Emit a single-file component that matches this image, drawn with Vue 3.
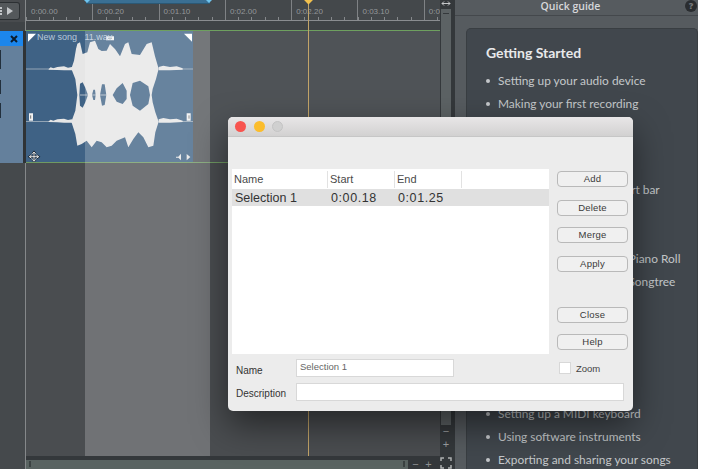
<script setup>
const marks = ['0:00.00', '0:00.20', '0:01.10', '0:02.00', '0:02.20', '0:03.10', '0:04.00']

const guideGroups = [
  ['Setting up your audio device', 'Making your first recording'],
  [
    'Working with the transport bar',
    'Adding a track',
    'Editing clips',
    'Recording notes into the Piano Roll',
    'Building a structure with Songtree'
  ],
  ['Setting up a MIDI keyboard', 'Using software instruments', 'Exporting and sharing your songs']
]

const topButtons = ['Add', 'Delete', 'Merge', 'Apply']
const lowButtons = ['Close', 'Help']
</script>

<template>
  <div class="app">
    <aside class="track-col">
      <div class="track-top">
        <div class="play-btn"><span class="play-tri"></span></div>
      </div>
      <div class="track-head">
        <div class="track-title">
          <svg width="10" height="10" viewBox="0 0 10 10">
            <path d="M2 2 8 8M8 2 2 8" stroke="#0c1c2c" stroke-width="2" fill="none" />
          </svg>
        </div>
        <div class="track-notches">
          <i></i><i></i><i></i>
        </div>
      </div>
      <div class="track-rest"></div>
    </aside>

    <main class="middle">
      <div class="middle-top">
        <section class="arrange">
          <div class="ruler">
            <div v-for="(m, i) in marks" :key="m" class="mark" :class="{ first: i === 0 }">{{ m }}</div>
          </div>
          <div class="band"></div>
          <div class="lane">
            <div class="clip">
              <span class="clip-name">New song &nbsp; 11.wav</span>
              <svg class="wave" viewBox="78 96 501 393" width="167" height="131">
                <g fill="#e6e6e6">
                  <path fill-rule="evenodd" d="M214 209 222 185 228 150 232 134 240 130 248 165 262 160 270 130 285 125 295 150 305 156 320 155 330 135 345 150 360 172 375 135 385 130 395 165 420 168 440 135 455 130 465 172 476 209 468 240 458 270 455 288 458 310 466 340 476 368 466 400 460 440 445 445 430 415 415 400 400 420 385 445 375 415 350 425 335 440 320 445 305 430 290 425 275 445 260 425 245 435 232 440 226 405 214 368 226 335 232 288 226 240Z
                    M238 288 240 254 248 250 256 266 264 288 256 310 248 326 240 320Z
                    M276 288 280 272 285 272 287 288 285 303 280 303Z
                    M300 288 306 256 314 256 319 288 314 318 306 320Z
                    M338 288 350 268 368 252 380 275 380 300 368 315 350 308Z
                    M390 288 398 252 420 245 445 262 450 288 445 315 420 335 398 320Z" />
                  <path d="M78 209H214V211H78ZM476 209H579V211H476ZM78 366.500H214V368.500H78ZM476 366.500H579V368.500H476Z" />
                  <path d="M146 210 152 205 160 208 172 204 192 202 204 206 216 204 216 214 192 214 172 213 146 212ZM476 204 490 200 510 204 530 202 548 208 548 212 510 214 476 214ZM146 367 152 362 160 365 172 361 192 359 204 363 216 361 216 371 192 371 172 370 146 369ZM476 361 490 357 510 361 530 359 548 365 548 369 510 371 476 371Z" />
                </g>
                <path d="M240 287H336V289H240Z" fill="#e6e6e6" />
                <path d="M84 128V104H108ZM576 128V104H552Z" fill="#fff" />
                <path d="M87 343h12v22H87ZM560 343h12v22h-12ZM318 112h24v12h-24Z" fill="#f2f2f2" />
                <path d="M92 349v10M567 349v10M325 118h10" stroke="#333" stroke-width="2" />
                <path d="M528 473 535 473 543 464V484L535 476H528ZM560 465 571 474 560 484Z" fill="#e6e6e6" />
                <g fill="none">
                  <path d="M102 460V486M89 473H115M97 465 102 459 107 465M97 481 102 487 107 481M95 468 88 473 95 478M109 468 116 473 109 478" stroke="#1c2630" stroke-width="6" />
                  <path d="M102 460V486M89 473H115M97 465 102 459 107 465M97 481 102 487 107 481M95 468 88 473 95 478M109 468 116 473 109 478" stroke="#fff" stroke-width="2.500" />
                </g>
              </svg>
            </div>
          </div>
          <div class="lower"></div>
          <div class="selection"></div>
          <div class="loop-bar"></div>
          <div class="playhead"></div>
        </section>
        <div class="vscroll">
          <div class="fit-icon">
            <svg width="10" height="7" viewBox="0 0 10 7">
              <path d="M1 3.500H9M3 1.500 1 3.500 3 5.500M7 1.500 9 3.500 7 5.500" stroke="#c4c6c8" stroke-width="1" fill="none" />
            </svg>
          </div>
          <div class="vthumb"><i></i></div>
          <div class="zoom-sign">−</div>
          <div class="zoom-sign">+</div>
        </div>
      </div>
      <div class="hscroll">
        <div class="hthumb"><i></i><i class="end"></i></div>
        <span class="h-sign">−</span>
        <span class="h-sign">+</span>
        <svg class="fit-all" width="12" height="12" viewBox="0 0 12 12">
          <path d="M1 4V1H4M8 1H11V4M11 8V11H8M4 11H1V8" stroke="#aeb1b3" stroke-width="1.500" fill="none" />
        </svg>
      </div>
    </main>

    <section class="guide">
      <header class="guide-title">
        <span>Quick guide</span>
        <b class="help-dot">?</b>
      </header>
      <div class="guide-strip"></div>
      <article class="guide-card">
        <h2>Getting Started</h2>
        <ul v-for="(group, i) in guideGroups" :key="i" :class="'group-' + i">
          <li v-for="item in group" :key="item">{{ item }}</li>
        </ul>
      </article>
    </section>
    <div class="page-edge"></div>

    <div class="dialog">
      <div class="dlg-title">
        <i class="light red"></i>
        <i class="light yellow"></i>
        <i class="light grey"></i>
      </div>
      <div class="dlg-body">
        <div class="dlg-main">
          <div class="dlg-left">
            <div class="table">
              <div class="t-head">
                <span class="c1">Name</span>
                <span class="c2">Start</span>
                <span class="c3">End</span>
                <span class="c4"></span>
              </div>
              <div class="t-row">
                <span class="c1">Selection 1</span>
                <span class="c2">0:00.18</span>
                <span class="c3">0:01.25</span>
              </div>
            </div>
            <div class="field name-field">
              <label>Name</label>
              <div class="input">Selection 1</div>
            </div>
          </div>
          <div class="dlg-side">
            <div class="btn-group top">
              <button v-for="b in topButtons" :key="b" class="btn">{{ b }}</button>
            </div>
            <div class="btn-group low">
              <button v-for="b in lowButtons" :key="b" class="btn">{{ b }}</button>
            </div>
            <div class="zoom-row">
              <i class="check"></i>
              <span>Zoom</span>
            </div>
          </div>
        </div>
        <div class="field desc-field">
          <label>Description</label>
          <div class="input wide"></div>
        </div>
      </div>
    </div>
  </div>
</template>

<style scoped>
.app {
  position: relative;
  display: flex;
  width: 705px;
  height: 469px;
  overflow: hidden;
  background: #4a4d50;
  font-family: "Liberation Sans", Arial, sans-serif;
}

/* track column */
.track-col {
  width: 26px;
  flex: none;
  display: flex;
  flex-direction: column;
  border-right: 1px solid #85888a;
  box-sizing: border-box;
  background: #45494c;
}
.track-top {
  height: 31px;
  box-sizing: border-box;
  padding-top: 2px;
  background: linear-gradient(#484b4e 0 22px, #3f4346 22px);
}
.play-btn {
  width: 20px;
  height: 18px;
  box-sizing: border-box;
  border: 1px solid #2c3033;
  border-left: 0;
  border-radius: 0 3px 3px 0;
  background: #54585b;
  display: flex;
  align-items: center;
  justify-content: space-between;
  padding-right: 6px;
}
.play-btn::before {
  content: "";
  width: 2px;
  height: 8px;
  background: repeating-linear-gradient(#c3c6c9 0 2px, transparent 2px 3px);
}
.play-tri {
  width: 0;
  height: 0;
  border-left: 6px solid #c3c6c9;
  border-top: 4.500px solid transparent;
  border-bottom: 4.500px solid transparent;
}
.track-head {
  height: 132px;
  box-sizing: border-box;
  margin-right: -1px;
  border-right: 3px solid #2f3336;
  background: #64809c;
}
.track-title {
  height: 15px;
  background: #1c86ec;
  display: flex;
  align-items: center;
  justify-content: flex-end;
  padding-right: 4px;
}
.track-notches {
  padding-top: 4px;
}
.track-notches i {
  display: block;
  width: 1px;
  background: #22303d;
}
.track-notches i:nth-child(1) {
  height: 19px;
}
.track-notches i:nth-child(2) {
  height: 14px;
  margin-top: 11px;
}
.track-notches i:nth-child(3) {
  height: 15px;
  margin-top: 9px;
}
.track-rest {
  flex: 1;
  background: #45494c;
}

/* timeline */
.middle {
  width: 429px;
  flex: none;
  display: flex;
  flex-direction: column;
}
.middle-top {
  flex: 1;
  display: flex;
  min-height: 0;
}
.arrange {
  position: relative;
  width: 414px;
  flex: none;
  display: flex;
  flex-direction: column;
  background: #4a4d50;
}
.ruler {
  height: 21px;
  box-sizing: border-box;
  display: flex;
  background:
    repeating-linear-gradient(90deg, #85888b 0 1px, transparent 1px 13.260px) 0 17px / 100% 3px no-repeat,
    #44484b;
  border-bottom: 1px solid #8a8d90;
  overflow: hidden;
}
.mark {
  width: 66.300px;
  flex: none;
  box-sizing: border-box;
  height: 20px;
  padding: 7px 0 0 4px;
  border-left: 1px solid #7f8285;
  font-size: 8px;
  line-height: 10px;
  color: #94979a;
  white-space: nowrap;
}
.mark.first {
  border-left-color: transparent;
}
.band {
  height: 10px;
  box-sizing: border-box;
  background: #3f4346;
  border-bottom: 1px solid #6ea05f;
}
.lane {
  height: 132px;
  box-sizing: border-box;
  background: #4f5357;
  border-bottom: 1px solid #6f9a62;
}
.clip {
  position: relative;
  width: 167px;
  height: 131px;
  background: #3f6285;
}
.clip-name {
  position: absolute;
  left: 11px;
  top: 1px;
  font-size: 9px;
  line-height: 11px;
  color: #b8c9da;
  white-space: nowrap;
}
.wave {
  display: block;
}
.lower {
  flex: 1;
  background: #4a4d50;
}
.selection {
  position: absolute;
  left: 59px;
  top: 31px;
  bottom: 0;
  width: 125px;
  background: rgba(255, 255, 255, 0.21);
}
.loop-bar {
  position: absolute;
  left: 60px;
  top: 0;
  width: 124px;
  height: 4px;
  background: #3a6f93;
  border-bottom: 1px solid #2c5874;
  box-sizing: border-box;
}
.loop-bar::before,
.loop-bar::after {
  content: "";
  position: absolute;
  top: 0;
  border-top: 3px solid #6fc4ee;
  border-left: 3px solid transparent;
  border-right: 3px solid transparent;
}
.loop-bar::before {
  left: -2px;
}
.loop-bar::after {
  right: -2px;
}
.playhead {
  position: absolute;
  left: 282px;
  top: 0;
  bottom: 0;
  width: 1px;
  background: #c2a468;
}
.playhead::before {
  content: "";
  position: absolute;
  left: -3px;
  top: -4px;
  width: 7px;
  height: 7px;
  background: #f2c14e;
  transform: rotate(45deg);
}

.vscroll {
  width: 15px;
  flex: none;
  box-sizing: border-box;
  padding: 0 3px 0 0;
  display: flex;
  flex-direction: column;
  align-items: center;
  background: #34383b;
}
.fit-icon {
  width: 13px;
  height: 9px;
  display: flex;
  justify-content: center;
}
.vthumb {
  width: 10px;
  height: 416px;
  flex: none;
  box-sizing: border-box;
  background: #5c6264;
  padding-top: 4px;
  display: flex;
  justify-content: center;
}
.vthumb i {
  width: 6px;
  height: 1px;
  background: #34383b;
}
.zoom-sign {
  height: 13px;
  font-size: 11px;
  line-height: 13px;
  color: #9ea1a3;
}

.hscroll {
  height: 13px;
  flex: none;
  box-sizing: border-box;
  padding: 3px 3px 0 0;
  display: flex;
  align-items: center;
  gap: 2px;
  background: #34383b;
}
.hthumb {
  width: 382px;
  height: 9px;
  flex: none;
  display: flex;
  justify-content: space-between;
  align-items: center;
  padding: 0 3px;
  box-sizing: border-box;
  background: #596361;
}
.hthumb i {
  width: 2px;
  height: 6px;
  background: #3b4242;
}
.h-sign {
  width: 11px;
  font-size: 11px;
  line-height: 10px;
  text-align: center;
  color: #8d9092;
}
.fit-all {
  margin: -3px 0 0 auto;
}

/* quick guide */
.guide {
  width: 243px;
  flex: none;
  display: flex;
  flex-direction: column;
  background: #565b5f;
}
.guide-title {
  position: relative;
  height: 16px;
  flex: none;
  box-sizing: border-box;
  padding-right: 12px;
  border-bottom: 1px solid #44484c;
  text-align: center;
  font-family: "Open Sans", sans-serif;
  font-size: 10.500px;
  font-weight: 600;
  line-height: 13px;
  color: #d6d8da;
}
.help-dot {
  position: absolute;
  right: 1px;
  top: 0;
  width: 12px;
  height: 12px;
  border-radius: 50%;
  background: #2a2d30;
  color: #77797b;
  font-size: 9px;
  line-height: 12px;
}
.guide-strip {
  height: 12px;
  flex: none;
}
.guide-card {
  flex: 1;
  margin-left: 11px;
  padding: 15px 0 0 19px;
  box-sizing: border-box;
  border-radius: 5px 5px 0 0;
  border: 1px solid #393e42;
  border-bottom: 0;
  background: #41474d;
  font-family: Lato, sans-serif;
}
.guide-card h2 {
  margin: 0 0 7px;
  font-size: 14px;
  line-height: 18px;
  font-weight: 700;
  color: #e8e9ea;
}
.guide-card ul {
  margin: 0;
  padding: 0;
  list-style: none;
}
.guide-card li {
  position: relative;
  height: 23px;
  padding-left: 12px;
  font-size: 11.900px;
  line-height: 23px;
  color: #c4c7ca;
  white-space: nowrap;
}
.guide-card li::before {
  content: "";
  position: absolute;
  left: 0;
  top: 10px;
  width: 4px;
  height: 4px;
  border-radius: 50%;
  background: #c4c7ca;
}
.group-1 {
  margin-top: 63px !important;
}
.group-2 {
  margin-top: 109px !important;
}
.page-edge {
  flex: 1;
  background: #fff;
}

/* selection dialog */
.dialog {
  position: absolute;
  left: 228px;
  top: 117px;
  width: 405px;
  height: 294px;
  border-radius: 5px;
  overflow: hidden;
  background: #ececec;
  box-shadow: 0 14px 34px rgba(0, 0, 0, 0.5);
  color: #3a3a3a;
}
.dlg-title {
  height: 20px;
  box-sizing: border-box;
  display: flex;
  align-items: center;
  gap: 7.500px;
  padding-left: 7px;
  background: linear-gradient(#e8e6e7, #d2d1d1);
  border-bottom: 1px solid #c6c6c6;
}
.light {
  width: 11px;
  height: 11px;
  border-radius: 50%;
}
.red { background: #f8544f; }
.yellow { background: #fbbd2c; }
.grey { background: #d0d0d0; border: 1px solid #c4c4c4; box-sizing: border-box; }
.dlg-body {
  padding: 32px 9px 0 4px;
}
.dlg-main {
  display: flex;
  gap: 8px;
}
.dlg-left {
  width: 317px;
  flex: none;
}
.table {
  height: 185px;
  background: #fff;
  font-size: 11px;
}
.t-head {
  height: 20px;
  display: flex;
  align-items: center;
  color: #4a4a4a;
}
.t-head span {
  height: 17px;
  line-height: 17px;
  box-sizing: border-box;
  border-right: 1px solid #e2e2e2;
  padding-left: 2px;
}
.t-row {
  height: 17px;
  display: flex;
  align-items: center;
  background: #e0e0e0;
  font-size: 12.500px;
  color: #333;
}
.t-row span {
  box-sizing: border-box;
  padding: 1px 0 0 3px;
}
.t-row .c2,
.t-row .c3 {
  letter-spacing: 0.6px;
}
.c1 { width: 96px; }
.c2 { width: 67px; }
.c3 { width: 67px; }
.c4 { width: 87px; border-right: 0 !important; }
.field {
  display: flex;
  align-items: center;
  font-size: 10px;
  color: #333;
}
.field label {
  width: 64px;
  flex: none;
  padding-left: 4px;
  box-sizing: border-box;
  line-height: 12px;
}
.name-field {
  margin-top: 5px;
}
.name-field label {
  padding-top: 5px;
}
.desc-field {
  margin-top: 6px;
}
.desc-field label {
  padding-top: 3px;
}
.input {
  width: 158px;
  height: 18px;
  box-sizing: border-box;
  border: 1px solid #d8d8d8;
  background: #fff;
  padding-left: 3px;
  font-size: 9.500px;
  line-height: 14px;
  color: #666;
}
.input.wide {
  width: 328px;
}
.dlg-side {
  width: 72px;
  flex: none;
  padding-top: 2px;
  display: flex;
  flex-direction: column;
}
.btn-group {
  display: flex;
  flex-direction: column;
}
.btn-group.top .btn:nth-child(2) {
  margin-top: 13px;
}
.btn-group.top .btn:nth-child(3) {
  margin-top: 11px;
}
.btn-group.top .btn:nth-child(4) {
  margin-top: 13px;
}
.btn-group.low {
  margin-top: 35px;
  gap: 11px;
}
.btn {
  display: block;
  width: 71px;
  height: 16px;
  margin: 0;
  padding: 0;
  box-sizing: border-box;
  border: 1px solid #b9b9b9;
  border-radius: 4px;
  background: #f0f0f0;
  font-family: inherit;
  font-size: 9.500px;
  line-height: 14px;
  letter-spacing: 0.2px;
  color: #3a3a3a;
}
.zoom-row {
  display: flex;
  align-items: center;
  gap: 5px;
  margin-top: 12px;
  padding-left: 2px;
  font-size: 9.500px;
  color: #444;
}
.check {
  width: 12px;
  height: 12px;
  box-sizing: border-box;
  border: 1px solid #d8d8d8;
  background: #fff;
}
</style>
